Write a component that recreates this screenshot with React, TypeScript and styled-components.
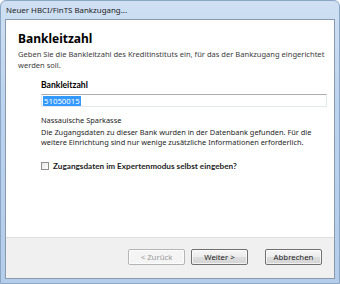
import React from "react";
import styled, { createGlobalStyle } from "styled-components";

const GlobalStyle = createGlobalStyle`
  html, body {
    margin: 0;
    padding: 0;
    background: #ffffff;
  }
  body {
    font-family: "Noto Sans", "Open Sans", "DejaVu Sans", sans-serif;
    -webkit-font-smoothing: antialiased;
  }
`;

const Frame = styled.div`
  width: 340px;
  height: 284px;
  box-sizing: border-box;
  display: flex;
  flex-direction: column;
  padding: 0 4px 4px 4px;
  background: linear-gradient(180deg, #cfe0f3 0%, #bad2ee 40%, #b3cdea 100%);
  border: 1px solid #8ca6c6;
  border-radius: 6px 6px 0 0;
`;

const TitleBar = styled.div`
  height: 18px;
  display: flex;
  align-items: center;
  padding-left: 1px;
  font-size: 7.9px;
  color: #1e1e1e;
  flex-shrink: 0;
`;

const Body = styled.div`
  flex: 1;
  display: flex;
  flex-direction: column;
  border: 1px solid #8a99ac;
  background: #f0f0f0;
  min-height: 0;
`;

const Page = styled.div`
  flex: 1;
  background: #ffffff;
  padding: 11px 4px 0 12px;
  display: flex;
  flex-direction: column;
`;

const Heading = styled.h1`
  margin: 0;
  font-size: 12px;
  font-weight: 700;
  line-height: 16px;
  color: #000;
`;

const Lead = styled.p`
  margin: 2px 0 0 0;
  font-size: 7.55px;
  line-height: 11px;
  color: #3c3c3c;
  white-space: nowrap;
`;

const Section = styled.div`
  margin: 8px 0 0 23px;
  display: flex;
  flex-direction: column;
  align-items: flex-start;
`;

const FieldLabel = styled.label`
  font-family: Lato, "Noto Sans", sans-serif;
  font-size: 8.6px;
  font-weight: 700;
  line-height: 12px;
  color: #000;
`;

const Input = styled.div`
  margin-top: 3px;
  width: 286px;
  height: 13px;
  box-sizing: border-box;
  border: 1px solid #e3e9ef;
  border-top-color: #abadb3;
  border-left-color: #e2e3ea;
  display: flex;
  align-items: center;
  padding-left: 1px;
`;

const Selected = styled.span`
  background: #3399ff;
  color: #fff;
  font-size: 7.8px;
  line-height: 10px;
  padding: 0 1px;
`;

const Text = styled.p<{ $gap?: number }>`
  margin: ${({ $gap }) => $gap ?? 0}px 0 0 0;
  font-size: 7.4px;
  line-height: 10.5px;
  color: #1e1e1e;
  white-space: nowrap;
`;

const CheckRow = styled.div`
  margin-top: 13px;
  display: flex;
  align-items: center;
  gap: 4px;
`;

const Box = styled.span`
  width: 8px;
  height: 8px;
  box-sizing: border-box;
  border: 1px solid #8e8f8f;
  background: linear-gradient(135deg, #e6e6e6, #ffffff);
`;

const CheckLabel = styled.span`
  font-family: Lato, "Noto Sans", sans-serif;
  font-size: 8.2px;
  font-weight: 700;
  color: #1e1e1e;
`;

const Footer = styled.div`
  height: 38px;
  flex-shrink: 0;
  border-top: 1px solid #dfdfdf;
  display: flex;
  align-items: center;
  justify-content: flex-end;
  padding: 0 12px 2px 0;
`;

const Button = styled.button<{ $gapLeft?: number }>`
  width: 57px;
  height: 16px;
  margin-left: ${({ $gapLeft }) => $gapLeft ?? 6}px;
  padding: 0;
  font-family: inherit;
  font-size: 7.8px;
  color: #1e1e1e;
  border: 1px solid #707070;
  border-radius: 2px;
  background: linear-gradient(180deg, #f6f6f6 0%, #ececec 50%, #dedede 51%, #d3d3d3 100%);
  box-shadow: inset 0 0 0 1px rgba(255, 255, 255, 0.7);
  &:disabled {
    color: #9a9a9a;
    border-color: #b5b5b5;
    background: #f4f4f4;
  }
`;

export default function App() {
  return (
    <>
      <GlobalStyle />
      <Frame>
        <TitleBar>Neuer HBCI/FinTS Bankzugang...</TitleBar>
        <Body>
          <Page>
            <Heading>Bankleitzahl</Heading>
            <Lead>
              Geben Sie die Bankleitzahl des Kreditinstituts ein, für das der Bankzugang eingerichtet
              <br />
              werden soll.
            </Lead>
            <Section>
              <FieldLabel>Bankleitzahl</FieldLabel>
              <Input>
                <Selected>51050015</Selected>
              </Input>
              <Text $gap={8}>Nassauische Sparkasse</Text>
              <Text $gap={1}>
                Die Zugangsdaten zu dieser Bank wurden in der Datenbank gefunden. Für die
                <br />
                weitere Einrichtung sind nur wenige zusätzliche Informationen erforderlich.
              </Text>
              <CheckRow>
                <Box />
                <CheckLabel>Zugangsdaten im Expertenmodus selbst eingeben?</CheckLabel>
              </CheckRow>
            </Section>
          </Page>
          <Footer>
            <Button disabled>&lt; Zurück</Button>
            <Button>Weiter &gt;</Button>
            <Button $gapLeft={17}>Abbrechen</Button>
          </Footer>
        </Body>
      </Frame>
    </>
  );
}
